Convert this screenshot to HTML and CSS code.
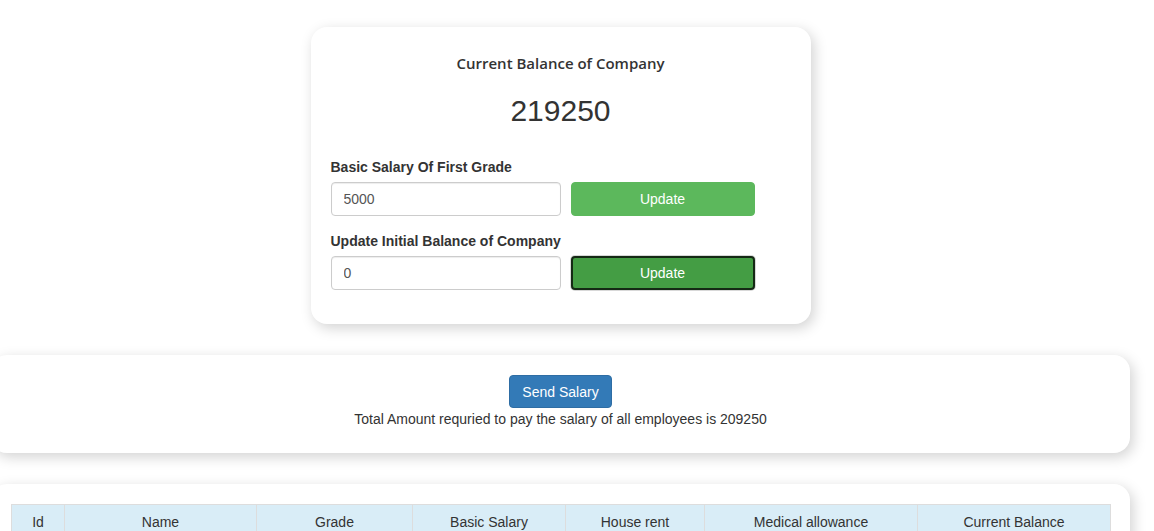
FILE: index.html
```html
<!DOCTYPE html>
<html>
<head>
<meta charset="utf-8">
<link rel="stylesheet" href="styles.css">
</head>
<body>
<div class="page">
  <div class="balance-card">
    <h3 class="title">Current Balance of Company</h3>
    <div class="amount">219250</div>
    <div class="field">
      <label class="label">Basic Salary Of First Grade</label>
      <div class="row">
        <input class="input" type="text" value="5000">
        <button class="btn btn-green">Update</button>
      </div>
    </div>
    <div class="field">
      <label class="label">Update Initial Balance of Company</label>
      <div class="row">
        <input class="input" type="text" value="0">
        <button class="btn btn-green btn-focus">Update</button>
      </div>
    </div>
  </div>

  <div class="wide-card send-card">
    <button class="btn btn-blue">Send Salary</button>
    <p class="total">Total Amount requried to pay the salary of all employees is 209250</p>
  </div>

  <div class="wide-card table-card">
    <table class="emp-table">
      <colgroup>
        <col class="c-id"><col class="c-name"><col class="c-grade"><col class="c-basic"><col class="c-house"><col class="c-med"><col class="c-cur">
      </colgroup>
      <thead>
        <tr>
          <th>Id</th><th>Name</th><th>Grade</th><th>Basic Salary</th><th>House rent</th><th>Medical allowance</th><th>Current Balance</th>
        </tr>
      </thead>
    </table>
  </div>
</div>
</body>
</html>
```
FILE: styles.css
```css
* { box-sizing: border-box; }
html, body { margin: 0; padding: 0; background: #fff; overflow: hidden; }
body {
  font-family: "Liberation Sans", Arial, sans-serif;
  font-size: 14px;
  color: #333;
  line-height: 20px;
}
.page {
  margin-left: -9px;
  width: 1139px;
  padding-top: 27px;
  display: flex;
  flex-direction: column;
  align-items: center;
}
.balance-card {
  width: 500px;
  background: #fff;
  border-radius: 16px;
  box-shadow: 3px 4px 14px rgba(0,0,0,0.18);
  padding: 25px 20px 34px 20px;
}
.title {
  margin: 0;
  text-align: center;
  font-family: "Open Sans", sans-serif;
  font-weight: 600;
  font-size: 15px;
  line-height: 22px;
  color: #333;
}
.amount {
  text-align: center;
  font-size: 30px;
  line-height: 34px;
  margin-top: 20px;
  color: #333;
}
.field + .field { margin-top: 15px; }
.amount + .field { margin-top: 29px; }
.label {
  display: block;
  font-weight: bold;
  font-size: 14px;
  line-height: 20px;
  margin-bottom: 5px;
}
.row { display: flex; gap: 10px; }
.input {
  width: 230px;
  height: 34px;
  border: 1px solid #ccc;
  border-radius: 4px;
  padding: 6px 12px;
  font-family: "Liberation Sans", Arial, sans-serif;
  font-size: 14px;
  color: #555;
  box-shadow: inset 0 1px 1px rgba(0,0,0,0.075);
}
.btn {
  font-family: "Liberation Sans", Arial, sans-serif;
  font-size: 14px;
  line-height: 20px;
  color: #fff;
  border-radius: 4px;
  cursor: pointer;
}
.btn-green {
  width: 184px;
  height: 34px;
  background: #5cb85c;
  border: 1px solid #5cb85c;
}
.btn-focus {
  background: #449d44;
  border: 2px solid #152915;
  box-shadow: 0 0 0 1px #d8d8d8;
}
.wide-card {
  align-self: flex-start;
  width: 1139px;
  background: #fff;
  border-radius: 16px;
  box-shadow: 3px 4px 14px rgba(0,0,0,0.18);
}
.send-card {
  margin-top: 31px;
  padding: 20px 20px 24px;
  text-align: center;
}
.btn-blue {
  width: 103px;
  height: 33px;
  background: #337ab7;
  border: 1px solid #2e6da4;
  padding: 0;
}
.total { margin: 1px 0 0; }
.table-card {
  margin-top: 31px;
  padding: 20px 20px 20px 20px;
  height: 120px;
}
.emp-table {
  width: 1099px;
  border-collapse: collapse;
  table-layout: fixed;
  border: 1px solid #ddd;
}
.c-id { width: 53px; }
.c-name { width: 192px; }
.c-grade { width: 156px; }
.c-basic { width: 153px; }
.c-house { width: 139px; }
.c-med { width: 213px; }
.c-cur { width: 193px; }
.emp-table th {
  background: #d9edf7;
  border: 1px solid #ddd;
  font-weight: normal;
  text-align: center;
  padding: 7px 8px 8px;
  line-height: 20px;
}
```
